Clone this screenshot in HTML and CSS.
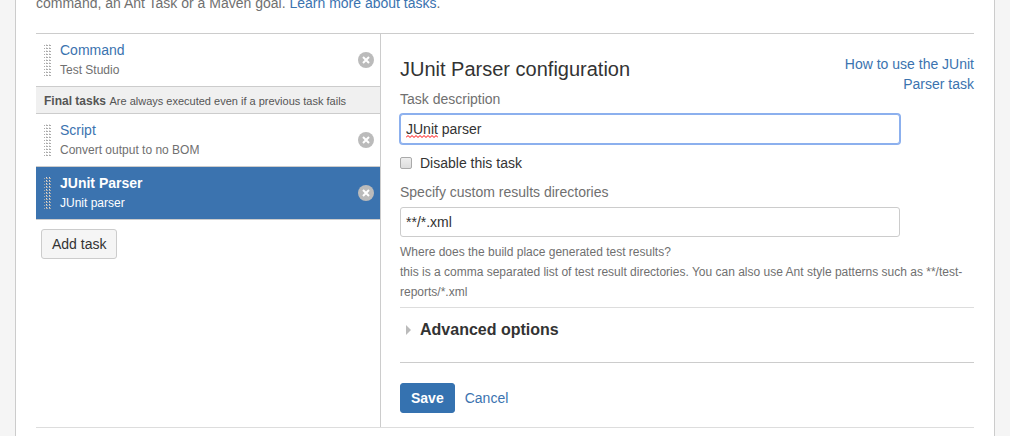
FILE: index.html
```html
<!DOCTYPE html>
<html lang="en">
  <head>
    <meta charset="UTF-8">
    <title>Job configuration - Tasks</title>
    <link rel="stylesheet" href="styles.css">
  </head>
  <body>
    <main class="panel">
      <p class="intro">command, an Ant Task or a Maven goal. <a href="#tasks-help">Learn more about tasks</a>.</p>

      <div class="tasks">
        <div class="task-list">
          <ul>
            <li class="task">
              <span class="handle"></span>
              <div class="task-text">
                <a class="task-title" href="#command">Command</a>
                <span class="task-desc">Test Studio</span>
              </div>
              <button type="button" class="delete" aria-label="Remove Command">
                <svg viewBox="0 0 16 16"><circle cx="8" cy="8" r="8"/><path d="M5 5l6 6M11 5l-6 6"/></svg>
              </button>
            </li>
            <li class="final-tasks"><strong>Final tasks</strong> Are always executed even if a previous task fails</li>
            <li class="task">
              <span class="handle"></span>
              <div class="task-text">
                <a class="task-title" href="#script">Script</a>
                <span class="task-desc">Convert output to no BOM</span>
              </div>
              <button type="button" class="delete" aria-label="Remove Script">
                <svg viewBox="0 0 16 16"><circle cx="8" cy="8" r="8"/><path d="M5 5l6 6M11 5l-6 6"/></svg>
              </button>
            </li>
            <li class="task active">
              <span class="handle"></span>
              <div class="task-text">
                <a class="task-title" href="#junit">JUnit Parser</a>
                <span class="task-desc">JUnit parser</span>
              </div>
              <button type="button" class="delete" aria-label="Remove JUnit Parser">
                <svg viewBox="0 0 16 16"><circle cx="8" cy="8" r="8"/><path d="M5 5l6 6M11 5l-6 6"/></svg>
              </button>
            </li>
          </ul>
          <button type="button" class="btn">Add task</button>
        </div>

        <form class="config">
          <header class="config-header">
            <h2>JUnit Parser configuration</h2>
            <a class="help-link" href="#junit-help">How to use the JUnit Parser task</a>
          </header>

          <label class="label" for="description">Task description</label>
          <div class="field">
            <input type="text" class="text focused" id="description" value="JUnit parser" spellcheck="false">
            <svg class="squiggle" viewBox="0 0 32 3"><path d="M0 2.5l2-2 2 2 2-2 2 2 2-2 2 2 2-2 2 2 2-2 2 2 2-2 2 2 2-2 2 2 2-2 2 2"/></svg>
          </div>

          <div class="check">
            <input type="checkbox" id="disabled">
            <label for="disabled">Disable this task</label>
          </div>

          <label class="label" for="results">Specify custom results directories</label>
          <div class="field">
            <input type="text" class="text" id="results" value="**/*.xml">
          </div>
          <p class="hint">Where does the build place generated test results?<br>
            this is a comma separated list of test result directories. You can also use Ant style patterns such as **/test-reports/*.xml</p>

          <h3 class="advanced"><svg viewBox="0 0 5 10"><path d="M0 0l5 5-5 5z"/></svg>Advanced options</h3>

          <div class="buttons">
            <button type="submit" class="btn primary">Save</button>
            <a href="#cancel">Cancel</a>
          </div>
        </form>
      </div>
    </main>
  </body>
</html>
```
FILE: styles.css
```css
body {
  margin: 0;
  background-color: #f5f5f5;
  color: #333;
  font-family: Arial, "Liberation Sans", sans-serif;
  font-size: 14px;
  line-height: 20px;
}

a {
  color: #3b73af;
  text-decoration: none;
}

.panel {
  display: flow-root;
  box-sizing: border-box;
  min-height: 100vh;
  margin: 0 15px;
  padding: 0 20px;
  background-color: #fff;
  border: 1px solid #ccc;
  border-width: 0 1px;
}

.intro {
  margin: -7px 0 20px;
  color: #707070;
}

.tasks {
  display: flex;
  border-top: 1px solid #ccc;
  border-bottom: 1px solid #ddd;
}

/* task list */
.task-list {
  flex: 0 0 344px;
  border-right: 1px solid #ccc;
}

.task-list ul {
  list-style: none;
  margin: 0 0 9px;
  padding: 0;
}

.task-list .btn {
  margin-left: 5px;
}

.task {
  display: flex;
  align-items: center;
  padding: 6px 6px 6px 8px;
  border-bottom: 1px solid #ccc;
}

.handle {
  width: 8px;
  height: 32px;
  margin-right: 8px;
  background:
    conic-gradient(from 90deg at 1px 1px, transparent 270deg, #aaa 0) 1px 1px / 3px 3px,
    conic-gradient(from 90deg at 2px 2px, transparent 270deg, #ddd 0) 0 0 / 3px 3px;
}

.task-text {
  flex: 1;
}

.task-title,
.task-desc {
  display: block;
}

.task-desc {
  color: #707070;
  font-size: 12px;
}

.delete {
  width: 16px;
  height: 16px;
  padding: 0;
  border: 0;
  background: none;
  cursor: pointer;
}

.delete svg {
  display: block;
}

.delete circle {
  fill: #bbb;
}

.delete path {
  stroke: #fff;
  stroke-width: 2;
}

.active {
  background-color: #3b73af;
}

.active .task-title,
.active .task-desc {
  color: #fff;
}

.active .task-title {
  font-weight: bold;
}

.final-tasks {
  padding: 4px 8px 2px;
  background-color: #f0f0f0;
  border-bottom: 1px solid #ccc;
  color: #555;
  font-size: 11px;
}

.final-tasks strong {
  margin-right: 1px;
  font-size: 12px;
}

/* task configuration */
.config {
  flex: 1;
  padding: 20px 0 14px 19px;
}

.config-header {
  display: flex;
  justify-content: space-between;
  height: 35px;
}

.config-header h2 {
  margin: 0;
  font-size: 20px;
  font-weight: normal;
  line-height: 30px;
}

.help-link {
  width: 140px;
  text-align: right;
}

.label {
  display: block;
  color: #707070;
}

.field {
  position: relative;
  margin-top: 5px;
}

.text {
  display: block;
  box-sizing: border-box;
  width: 100%;
  max-width: 500px;
  height: 30px;
  padding: 4px 5px;
  border: 1px solid #ccc;
  border-radius: 3px;
  color: #333;
  font: inherit;
}

.focused {
  border-color: #8cb0ee;
  box-shadow: 0 0 0 1px #8cb0ee;
}

.squiggle {
  position: absolute;
  left: 6px;
  bottom: 6px;
  width: 32px;
  height: 3px;
  fill: none;
  stroke: #f00;
}

.check {
  display: flex;
  align-items: center;
  gap: 8px;
  margin: 9px 0;
}

.check input {
  appearance: none;
  box-sizing: border-box;
  width: 12px;
  height: 12px;
  margin: 0;
  border: 1px solid #aaa;
  border-radius: 2px;
  background: linear-gradient(#eee, #ddd);
}

.hint {
  margin: 5px 0;
  color: #707070;
  font-size: 12px;
}

.advanced {
  display: flex;
  align-items: center;
  gap: 9px;
  margin: 0;
  padding: 12px 6px 22px;
  border-top: 1px solid #ddd;
  border-bottom: 1px solid #ccc;
  font-size: 16px;
}

.advanced svg {
  width: 5px;
  height: 10px;
  fill: #bbb;
}

.buttons {
  display: flex;
  align-items: center;
  gap: 10px;
  margin-top: 20px;
}

.btn {
  height: 30px;
  padding: 4px 10px;
  background-color: #f5f5f5;
  border: 1px solid #ccc;
  border-radius: 3px;
  color: #333;
  font: inherit;
  cursor: pointer;
}

.primary {
  background-color: #3572b0;
  border-color: #3572b0;
  color: #fff;
  font-weight: bold;
}
```
